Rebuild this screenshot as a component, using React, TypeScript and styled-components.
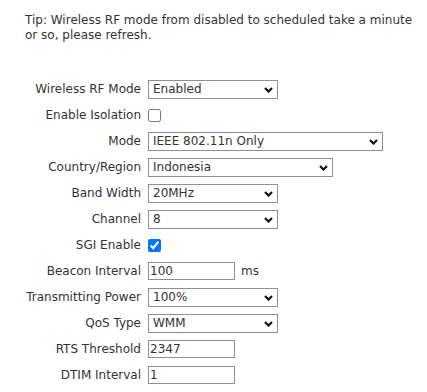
import React from "react";
import styled, { createGlobalStyle } from "styled-components";

const GlobalStyle = createGlobalStyle`
    body {
        margin: 0;
        background: #ffffff;
        font-family: "DejaVu Sans", "Liberation Sans", sans-serif;
        font-size: 12px;
        color: #333333;
    }
`;

const Page = styled.div`
    padding: 13px 0 0 25px;
`;

const Tip = styled.p`
    margin: 0;
    width: 396px;
    line-height: 15px;
`;

const Form = styled.div`
    display: grid;
    grid-template-columns: 116px 1fr;
    grid-auto-rows: 26px;
    column-gap: 7px;
    margin-top: 33px;
`;

const Label = styled.div`
    display: flex;
    align-items: center;
    justify-content: flex-end;
    white-space: nowrap;
`;

const Field = styled.div`
    display: flex;
    align-items: center;
    gap: 6px;
`;

const SelectBox = styled.div<{ $width: number }>`
    position: relative;
    width: ${(p) => p.$width}px;
    height: 19px;
`;

const Select = styled.select`
    appearance: none;
    box-sizing: border-box;
    width: 100%;
    height: 100%;
    margin: 0;
    padding: 0 18px 0 4px;
    border: 1px solid #8f8f8f;
    border-radius: 0;
    background: #ffffff;
    font-family: inherit;
    font-size: 12px;
    color: #333333;
    outline: none;
`;

const Chevron = styled.svg`
    position: absolute;
    right: 5px;
    top: 7px;
    width: 9px;
    height: 6px;
    pointer-events: none;
`;

const TextInput = styled.input`
    box-sizing: border-box;
    width: 87px;
    height: 18px;
    margin: 0;
    padding: 0 1px;
    border: 1px solid #8f8f8f;
    border-radius: 0;
    font-family: inherit;
    font-size: 12px;
    color: #333333;
    outline: none;
`;

const Check = styled.input`
    width: 13px;
    height: 13px;
    margin: 0;
    accent-color: #0075ff;
`;

const Unit = styled.span`
    padding-left: 0;
`;

const Dropdown = ({ width, value, options }: { width: number; value: string; options: string[] }) => (
    <SelectBox $width={width}>
        <Select defaultValue={value}>
            {options.map((o) => (
                <option key={o}>{o}</option>
            ))}
        </Select>
        <Chevron viewBox="0 0 9 6">
            <path d="M1 1 L4.5 4.5 L8 1" fill="none" stroke="#111" strokeWidth="2.2" />
        </Chevron>
    </SelectBox>
);

const App = () => {
    return (<Page>
        <GlobalStyle />
        <Tip>Tip: Wireless RF mode from disabled to scheduled take a minute or so, please refresh.</Tip>
        <Form>
            <Label>Wireless RF Mode</Label>
            <Field><Dropdown width={130} value="Enabled" options={["Enabled", "Disabled", "Scheduled"]} /></Field>

            <Label>Enable Isolation</Label>
            <Field><Check type="checkbox" /></Field>

            <Label>Mode</Label>
            <Field><Dropdown width={235} value="IEEE 802.11n Only" options={["IEEE 802.11n Only", "IEEE 802.11b/g/n Mixed"]} /></Field>

            <Label>Country/Region</Label>
            <Field><Dropdown width={185} value="Indonesia" options={["Indonesia"]} /></Field>

            <Label>Band Width</Label>
            <Field><Dropdown width={130} value="20MHz" options={["20MHz", "40MHz"]} /></Field>

            <Label>Channel</Label>
            <Field><Dropdown width={130} value="8" options={["Auto", "1", "2", "3", "4", "5", "6", "7", "8", "9", "10", "11", "12", "13"]} /></Field>

            <Label>SGI Enable</Label>
            <Field><Check type="checkbox" defaultChecked /></Field>

            <Label>Beacon Interval</Label>
            <Field><TextInput defaultValue="100" /><Unit>ms</Unit></Field>

            <Label>Transmitting Power</Label>
            <Field><Dropdown width={130} value="100%" options={["100%", "75%", "50%", "25%"]} /></Field>

            <Label>QoS Type</Label>
            <Field><Dropdown width={130} value="WMM" options={["WMM", "Disabled"]} /></Field>

            <Label>RTS Threshold</Label>
            <Field><TextInput defaultValue="2347" /></Field>

            <Label>DTIM Interval</Label>
            <Field><TextInput defaultValue="1" /></Field>
        </Form>
    </Page>);
};

export default App;
